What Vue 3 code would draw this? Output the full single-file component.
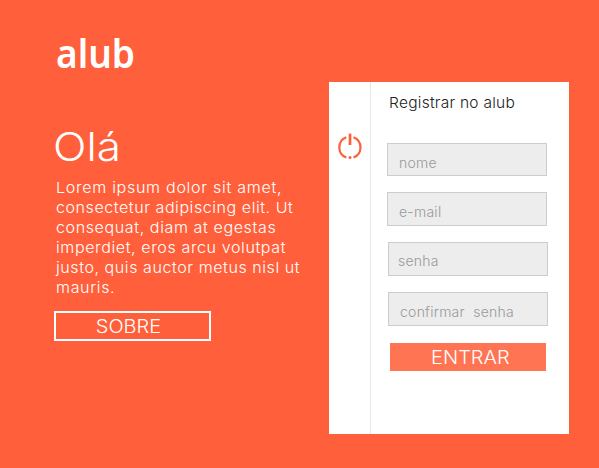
<script setup>
const lines = [
  { text: 'Lorem ipsum dolor sit amet,', spacing: 0.66 },
  { text: 'consectetur adipiscing elit. Ut', spacing: 0.51 },
  { text: 'consequat, diam at egestas', spacing: 0.56 },
  { text: 'imperdiet, eros arcu volutpat', spacing: 0.56 },
  { text: 'justo, quis auctor metus nisl ut', spacing: 0.52 },
  { text: 'mauris.', spacing: 0.6 },
]
const fields = ['nome', 'e-mail', 'senha', 'confirmar\u00a0 senha']
</script>

<template>
  <main class="page">
    <section class="intro">
      <div class="logo">alub</div>
      <h1>Olá</h1>
      <p>
        <span v-for="line in lines" :key="line.text" :style="{ letterSpacing: line.spacing + 'px' }">{{ line.text }}</span>
      </p>
      <button class="about"><span>SOBRE</span></button>
    </section>
    <section class="card">
      <aside>
        <svg width="26" height="28" viewBox="0 0 26 28" fill="none" stroke="#ff5f3a">
          <path d="M9.3 4.3A10.8 10.8 0 0 0 9.3 24.5M16.5 4.3A10.8 10.8 0 0 1 16.5 24.5" stroke-width="2.2" />
          <path d="M13 0.6V12" stroke-width="2.7" />
          <circle cx="13" cy="24.6" r="1.5" fill="#ff5f3a" stroke="none" />
        </svg>
      </aside>
      <form @submit.prevent>
        <h2>Registrar no alub</h2>
        <div v-for="(field, i) in fields" :key="field" class="field" :class="'f' + i"><span>{{ field }}</span></div>
        <button class="enter"><span>ENTRAR</span></button>
      </form>
    </section>
  </main>
</template>

<style>
body { margin: 0; background: #ff5f3a; }
</style>

<style scoped>
* { box-sizing: border-box; }
.page {
  width: 599px;
  height: 468px;
  display: flex;
  background: #ff5f3a;
  color: #fff;
  font-family: Inter, "Liberation Sans", sans-serif;
  font-weight: 300;
  overflow: hidden;
}
.intro { width: 328.5px; padding: 28px 0 0 55px; flex: none; }
.logo {
  height: 50px;
  margin-left: 1px;
  font: 600 39px/50px "Noto Sans", sans-serif;
  transform: scaleX(0.95);
  transform-origin: 0 50%;
}
h1 {
  margin: 44px 0 0 -2px;
  font-size: 39px;
  line-height: 50px;
  font-weight: 300;
  transform: scaleX(1.13);
  transform-origin: 0 50%;
}
p { margin: 6px 0 0 1px; font-size: 15px; line-height: 20px; white-space: nowrap; }
p span { display: block; transform: scaleX(1.07); transform-origin: 0 50%; }
button { display: block; padding: 0; border: 0; border-radius: 0; color: #fff; font: 300 18px/1 Inter, sans-serif; }
button span { display: inline-block; transform: scaleX(1.11); }
.about {
  width: 157px;
  height: 30px;
  margin: 13px 0 0 -1px;
  border: 2px solid #fff;
  background: none;
  padding: 1px 8px 0 0;
}
.card {
  display: flex;
  width: 240.5px;
  height: 352px;
  margin-top: 82px;
  background: #fff;
}
aside { width: 42px; padding: 51px 0 0 8px; border-right: 1px solid #e6e6e6; flex: none; }
aside svg { display: block; }
form { padding: 11px 0 0 16.5px; }
h2 {
  margin: 0 0 30px 2px;
  color: #222;
  font-size: 15px;
  line-height: 20px;
  font-weight: 300;
  letter-spacing: 0.25px;
  white-space: nowrap;
  transform: scaleX(1.035);
  transform-origin: 0 50%;
}
.field {
  width: 160px;
  height: 34px;
  margin-bottom: 16px;
  border: 1px solid #ccc;
  background: #ededed;
  color: #999;
  font-size: 14px;
  line-height: 37px;
  letter-spacing: 0.25px;
  padding-left: 11px;
  white-space: nowrap;
}
.f0 { height: 33px; }
.f1 { line-height: 38px; }
.f2 { padding-left: 9px; line-height: 35px; margin-left: 1px; }
.f3 { margin-left: 1px; line-height: 38px; }
.enter { width: 156px; height: 28px; margin: 17px 0 0 3px; background: #ff7452; padding: 2px 0 0 5px; }
</style>
